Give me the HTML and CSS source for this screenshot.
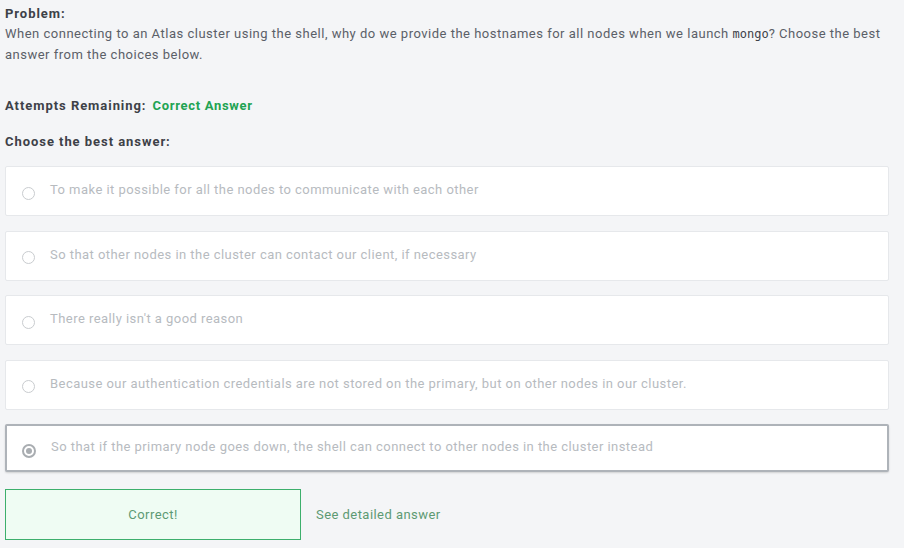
FILE: index.html
```html
<!DOCTYPE html>
<html>
<head>
<meta charset="utf-8">
<link rel="stylesheet" href="styles.css">
</head>
<body>
<div class="page">
  <div class="problem">
    <div class="label">Problem:</div>
    <p class="question">When connecting to an Atlas cluster using the shell, why do we provide the hostnames for all nodes when we launch <code>mongo</code>? Choose the best answer from the choices below.</p>
  </div>
  <div class="attempts"><span class="label">Attempts Remaining:</span><span class="status">Correct Answer</span></div>
  <div class="label choose">Choose the best answer:</div>
  <div class="options">
    <div class="option"><span class="radio"></span><span class="otext">To make it possible for all the nodes to communicate with each other</span></div>
    <div class="option"><span class="radio"></span><span class="otext">So that other nodes in the cluster can contact our client, if necessary</span></div>
    <div class="option"><span class="radio"></span><span class="otext">There really isn't a good reason</span></div>
    <div class="option"><span class="radio"></span><span class="otext">Because our authentication credentials are not stored on the primary, but on other nodes in our cluster.</span></div>
    <div class="option selected"><span class="radio checked"></span><span class="otext">So that if the primary node goes down, the shell can connect to other nodes in the cluster instead</span></div>
  </div>
  <div class="result">
    <div class="correct">Correct!</div>
    <a class="detail">See detailed answer</a>
  </div>
</div>
</body>
</html>
```

FILE: styles.css
```css
html, body {
  margin: 0;
  padding: 0;
  background: #f4f5f7;
}
body {
  font-family: "Roboto", "Liberation Sans", sans-serif;
  font-size: 13px;
  color: #4a4f55;
  letter-spacing: 0.45px;
}
.page {
  padding: 4px 5px 0 5px;
  width: 884px;
}
.label {
  font-weight: bold;
  color: #3d4148;
  letter-spacing: 0.95px;
}
.problem .label {
  line-height: 20px;
}
.question {
  margin: -1px 0 0 0;
  line-height: 21px;
  color: #5b6068;
  letter-spacing: 0.5px;
}
.question code {
  font-family: "DejaVu Sans Mono", monospace;
  font-size: 12px;
  line-height: 1;
  letter-spacing: 0;
  color: #3d4148;
}
.attempts {
  margin-top: 31px;
  line-height: 20px;
  display: flex;
  gap: 6px;
}
.status {
  color: #21a352;
  font-weight: bold;
  letter-spacing: 0.7px;
}
.choose {
  margin-top: 16px;
  line-height: 20px;
}
.options {
  margin-top: 14px;
  display: flex;
  flex-direction: column;
  gap: 14.5px;
}
.option {
  background: #fff;
  border: 1px solid #e6e8eb;
  border-radius: 2px;
  display: flex;
  align-items: center;
  box-sizing: border-box;
  height: 50px;
  padding-left: 16px;
}
.option.selected {
  border: 2px solid #aeb3b9;
  height: 48px;
  padding-left: 15px;
  box-shadow: 0 1px 2px rgba(0,0,0,0.15);
}
.radio {
  width: 11px;
  height: 11px;
  border: 1px solid #c9cccf;
  border-radius: 50%;
  margin-top: 4px;
  margin-right: 15px;
  flex: none;
}
.radio.checked {
  border: 2px solid #a9adb1;
  width: 10px;
  height: 10px;
  position: relative;
  margin-top: 5px;
}
.radio.checked::after {
  content: "";
  position: absolute;
  left: 2px;
  top: 2px;
  width: 6px;
  height: 6px;
  border-radius: 50%;
  background: #a9adb1;
}
.otext {
  color: #b7bbbf;
  margin-top: -3px;
}
.result {
  margin-top: 17px;
  display: flex;
  align-items: center;
  gap: 15px;
}
.correct {
  width: 296px;
  height: 51px;
  box-sizing: border-box;
  border: 1px solid #3daf6c;
  background: #effcf3;
  color: #5d9a73;
  display: flex;
  align-items: center;
  justify-content: center;
}
.detail {
  color: #5d9a73;
  cursor: pointer;
}
```
